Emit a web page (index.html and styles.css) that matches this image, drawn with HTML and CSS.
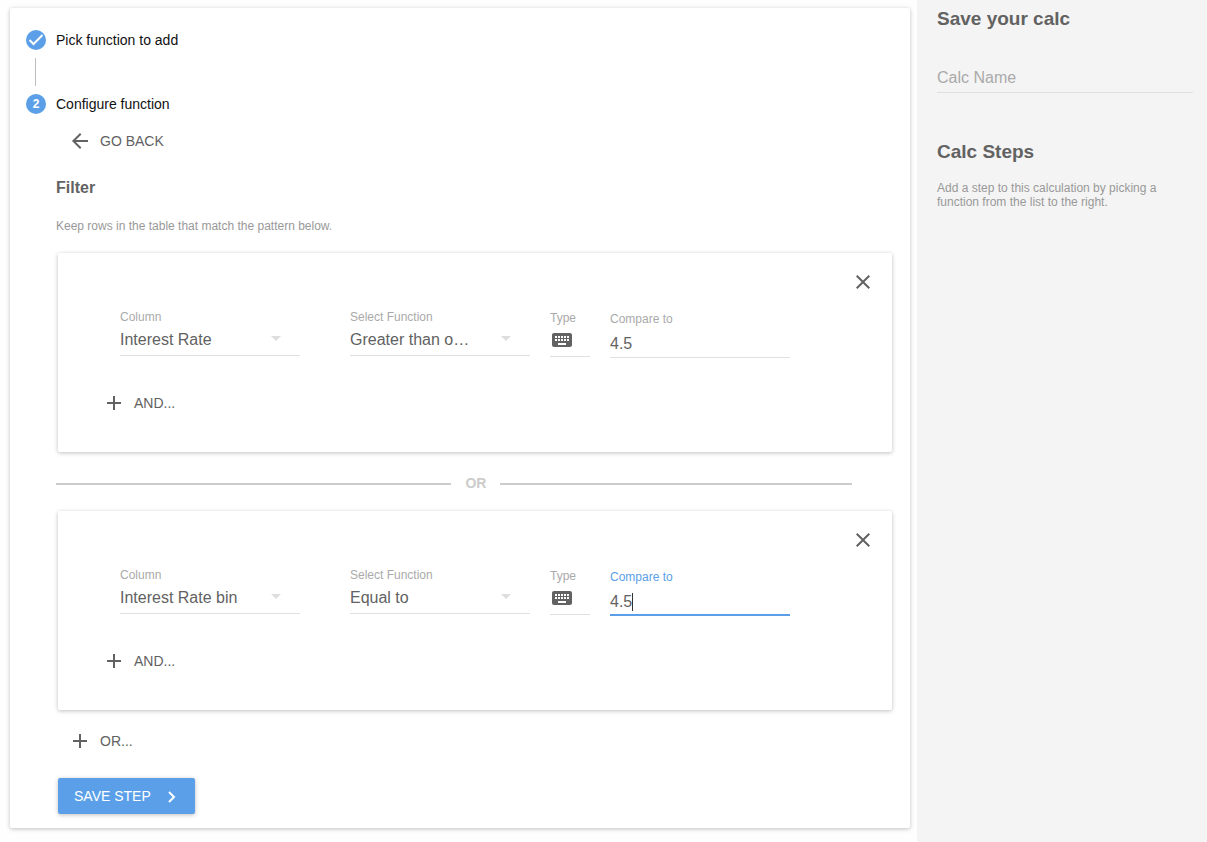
FILE: index.html
```html
<!DOCTYPE html>
<html lang="en">
<head>
<meta charset="utf-8">
<title>Save your calc</title>
<link rel="stylesheet" href="styles.css">
</head>
<body>
<main class="main">
  <section class="stepper">
    <div class="step">
      <span class="step-dot"><svg width="20" height="20" viewBox="0 0 20 20" aria-hidden="true"><path d="M3.500 10l4 4 9-9" fill="none" stroke="#fff" stroke-width="2"/></svg></span>
      <span>Pick function to add</span>
    </div>
    <div class="step-line"></div>
    <div class="step">
      <span class="step-dot">2</span>
      <span>Configure function</span>
    </div>

    <div class="step-body">
      <button class="flat-button" type="button">
        <svg class="icon" viewBox="0 0 24 24" aria-hidden="true"><path d="M20 11H7.830l5.590-5.590L12 4l-8 8 8 8 1.410-1.410L7.830 13H20v-2z"/></svg>
        GO BACK
      </button>
      <h2 class="filter-title">Filter</h2>
      <p class="hint">Keep rows in the table that match the pattern below.</p>

      <div class="rule-card">
        <button class="close-button" type="button" aria-label="Remove"><svg class="icon" viewBox="0 0 24 24" aria-hidden="true"><path d="M19 6.410L17.590 5 12 10.590 6.410 5 5 6.410 10.590 12 5 17.590 6.410 19 12 13.410 17.590 19 19 17.590 13.410 12z"/></svg></button>
        <div class="fields">
          <div class="field field-column">
            <label class="label" for="column1">Column</label>
            <div class="select-box">
              <select class="select" id="column1"><option>Interest Rate</option></select>
              <svg class="caret-icon" viewBox="0 0 10 5" aria-hidden="true"><path d="M0 0h10L5 5z"/></svg>
            </div>
          </div>
          <div class="field field-function">
            <label class="label" for="function1">Select Function</label>
            <div class="select-box">
              <select class="select" id="function1"><option>Greater than or equal to</option></select>
              <svg class="caret-icon" viewBox="0 0 10 5" aria-hidden="true"><path d="M0 0h10L5 5z"/></svg>
            </div>
          </div>
          <div class="field field-type">
            <label class="label" for="type1">Type</label>
            <button class="type-button" id="type1" type="button"><svg class="icon" viewBox="0 0 24 24" aria-hidden="true"><path d="M20 5H4c-1.100 0-1.990.9-1.990 2L2 17c0 1.100.9 2 2 2h16c1.100 0 2-.9 2-2V7c0-1.100-.9-2-2-2zm-9 3h2v2h-2V8zm0 3h2v2h-2v-2zM8 8h2v2H8V8zm0 3h2v2H8v-2zm-1 2H5v-2h2v2zm0-3H5V8h2v2zm9 7H8v-2h8v2zm0-4h-2v-2h2v2zm0-3h-2V8h2v2zm3 3h-2v-2h2v2zm0-3h-2V8h2v2z"/></svg></button>
          </div>
          <div class="field field-compare">
            <label class="label" for="compare1">Compare to</label>
            <div class="input-box"><input class="input" id="compare1" type="text" value="4.5"></div>
          </div>
        </div>
        <button class="flat-button and-button" type="button">
          <svg class="icon" viewBox="0 0 24 24" aria-hidden="true"><path d="M19 13h-6v6h-2v-6H5v-2h6V5h2v6h6v2z"/></svg>
          AND...
        </button>
      </div>

      <div class="divider"><span class="divider-text">OR</span></div>

      <div class="rule-card">
        <button class="close-button" type="button" aria-label="Remove"><svg class="icon" viewBox="0 0 24 24" aria-hidden="true"><path d="M19 6.410L17.590 5 12 10.590 6.410 5 5 6.410 10.590 12 5 17.590 6.410 19 12 13.410 17.590 19 19 17.590 13.410 12z"/></svg></button>
        <div class="fields">
          <div class="field field-column">
            <label class="label" for="column2">Column</label>
            <div class="select-box">
              <select class="select" id="column2"><option>Interest Rate bin</option></select>
              <svg class="caret-icon" viewBox="0 0 10 5" aria-hidden="true"><path d="M0 0h10L5 5z"/></svg>
            </div>
          </div>
          <div class="field field-function">
            <label class="label" for="function2">Select Function</label>
            <div class="select-box">
              <select class="select" id="function2"><option>Equal to</option></select>
              <svg class="caret-icon" viewBox="0 0 10 5" aria-hidden="true"><path d="M0 0h10L5 5z"/></svg>
            </div>
          </div>
          <div class="field field-type">
            <label class="label" for="type2">Type</label>
            <button class="type-button" id="type2" type="button"><svg class="icon" viewBox="0 0 24 24" aria-hidden="true"><path d="M20 5H4c-1.100 0-1.990.9-1.990 2L2 17c0 1.100.9 2 2 2h16c1.100 0 2-.9 2-2V7c0-1.100-.9-2-2-2zm-9 3h2v2h-2V8zm0 3h2v2h-2v-2zM8 8h2v2H8V8zm0 3h2v2H8v-2zm-1 2H5v-2h2v2zm0-3H5V8h2v2zm9 7H8v-2h8v2zm0-4h-2v-2h2v2zm0-3h-2V8h2v2zm3 3h-2v-2h2v2zm0-3h-2V8h2v2z"/></svg></button>
          </div>
          <div class="field field-compare is-focused">
            <label class="label" for="compare2">Compare to</label>
            <div class="input-box"><input class="input" id="compare2" type="text" value="4.5"><span class="text-caret"></span></div>
          </div>
        </div>
        <button class="flat-button and-button" type="button">
          <svg class="icon" viewBox="0 0 24 24" aria-hidden="true"><path d="M19 13h-6v6h-2v-6H5v-2h6V5h2v6h6v2z"/></svg>
          AND...
        </button>
      </div>

      <button class="flat-button or-button" type="button">
        <svg class="icon" viewBox="0 0 24 24" aria-hidden="true"><path d="M19 13h-6v6h-2v-6H5v-2h6V5h2v6h6v2z"/></svg>
        OR...
      </button>
      <button class="save-button" type="button">
        SAVE STEP
        <svg width="8" height="14" viewBox="0 0 8 14" aria-hidden="true"><path d="M1 3l5 5-5 5" fill="none" stroke="#fff" stroke-width="2"/></svg>
      </button>
    </div>
  </section>
</main>

<aside class="sidebar">
  <h2 class="side-title">Save your calc</h2>
  <input class="name-input" type="text" placeholder="Calc Name" aria-label="Calc Name">
  <h2 class="side-title">Calc Steps</h2>
  <p class="side-hint">Add a step to this calculation by picking a function from the list to the right.</p>
</aside>
</body>
</html>
```
FILE: styles.css
```css
* {
  box-sizing: border-box;
}

body {
  display: flex;
  min-height: 100vh;
  margin: 0;
  background: #fefefe;
  color: #626262;
  font: 14px/20px "Liberation Sans", Arial, sans-serif;
}

h2,
p {
  margin: 0;
}

button,
input,
select {
  margin: 0;
  padding: 0;
  border: 0;
  border-radius: 0;
  outline: 0;
  background: transparent;
  color: inherit;
  font: inherit;
}

.main {
  flex: 1;
  min-width: 0;
  padding: 8px 7px 14px 10px;
}

.stepper,
.rule-card {
  border-radius: 2px;
  background: #fff;
  box-shadow: 0 1px 4px rgba(0, 0, 0, 0.26);
}

.stepper {
  padding: 22px 18px 14px 16px;
}

.step {
  display: flex;
  align-items: center;
  gap: 10px;
  color: #111;
}

.step-dot {
  display: flex;
  align-items: center;
  justify-content: center;
  width: 20px;
  height: 20px;
  border-radius: 50%;
  background: #5a9fe8;
  color: #fff;
  font-size: 12px;
  font-weight: bold;
}

.step-line {
  width: 1px;
  height: 28px;
  margin: 8px 9px;
  background: #bdbdbd;
}

.step-body {
  display: flex;
  flex-direction: column;
  align-items: stretch;
  padding: 9px 0 0 30px;
}

.icon {
  display: block;
  flex: none;
  width: 24px;
  height: 24px;
  fill: #626262;
}

.flat-button {
  display: flex;
  align-items: center;
  align-self: flex-start;
  gap: 8px;
  height: 36px;
  padding: 0 12px;
}

.filter-title {
  margin-top: 19px;
  font-size: 16px;
  line-height: 20px;
}

.hint,
.side-hint {
  color: #999;
  font-size: 12px;
  line-height: 14px;
}

.hint {
  margin-top: 21px;
}

.rule-card {
  display: flex;
  flex-direction: column;
  margin-left: 2px;
  padding: 17px 17px 31px 32px;
}

.hint + .rule-card {
  margin-top: 20px;
}

.close-button {
  align-self: flex-end;
}

.fields {
  display: flex;
  align-items: flex-start;
  gap: 20px;
  height: 64px;
  padding: 16px 0 0 30px;
}

.field {
  display: flex;
  flex-direction: column;
  width: 180px;
}

.field-column {
  margin-right: 30px;
}

.field-type {
  width: 40px;
  padding-top: 1px;
}

.field-compare {
  padding-top: 2px;
}

.label {
  color: #aaa;
  font-size: 12px;
  line-height: 14px;
}

.select-box,
.input-box {
  position: relative;
  display: flex;
}

.select {
  width: 100%;
  height: 32px;
  padding: 0 60px 0 0;
  border-bottom: 1px solid #e0e0e0;
  appearance: none;
  font-size: 16px;
  text-overflow: ellipsis;
}

.caret-icon {
  position: absolute;
  top: 12px;
  right: 19px;
  width: 10px;
  height: 5px;
  fill: #dedede;
}

.type-button {
  height: 32px;
  padding-bottom: 1px;
  border-bottom: 1px solid #e0e0e0;
}

.input {
  width: 100%;
  height: 32px;
  padding-top: 5px;
  border-bottom: 1px solid #e0e0e0;
  font-size: 16px;
}

.is-focused .label {
  color: #5a9fe8;
}

.is-focused .input {
  padding-top: 6px;
  border-bottom: 2px solid #5a9fe8;
}

.text-caret {
  position: absolute;
  top: 9px;
  left: 22px;
  width: 1px;
  height: 18px;
  background: #333;
}

.and-button {
  margin-top: 27px;
}

.divider {
  display: flex;
  align-items: center;
  gap: 14px;
  height: 59px;
  margin-right: 40px;
  padding-top: 5px;
  color: #ccc;
  font-weight: bold;
}

.divider-text {
  padding-bottom: 2px;
}

.divider::before,
.divider::after {
  content: "";
  flex: 9;
  height: 2px;
  background: #ccc;
}

.divider::after {
  flex: 8;
}

.or-button {
  margin-top: 13px;
}

.save-button {
  display: flex;
  align-items: center;
  align-self: flex-start;
  gap: 17px;
  height: 36px;
  margin: 19px 0 0 2px;
  padding: 0 19px 0 16px;
  border-radius: 2px;
  background: #5a9fe8;
  box-shadow: 0 1px 4px rgba(0, 0, 0, 0.26);
  color: #fff;
}

.sidebar {
  display: flex;
  flex-direction: column;
  flex: none;
  width: 290px;
  padding: 9px 14px 0 20px;
  background: #f4f4f4;
}

.side-title {
  font-size: 19px;
  line-height: 20px;
}

.name-input {
  height: 32px;
  margin: 32px 0 49px;
  padding-top: 3px;
  border-bottom: 1px solid #e0e0e0;
  font-size: 16px;
}

.name-input::placeholder {
  color: #aaa;
  opacity: 1;
}

.side-hint {
  margin-top: 19px;
}
```
